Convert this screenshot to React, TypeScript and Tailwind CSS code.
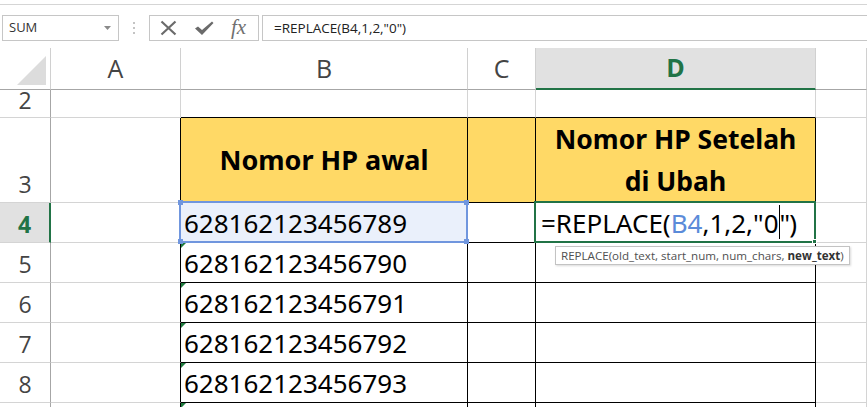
import React from 'react';

const UI_FONT = "font-['Open_Sans','Noto_Sans',sans-serif]";
const CELL_FONT = "font-['Noto_Sans','Open_Sans',sans-serif]";

const LIGHT = 'border-[#d4d4d4]';
const HEAD_SEP = 'border-r-[#d0d0d0]';

const phones = [
  '628162123456789',
  '628162123456790',
  '628162123456791',
  '628162123456792',
  '628162123456793',
];

// small green "number stored as text" flag in the top-left of a cell
function TextFlag() {
  return (
    <svg className="absolute left-0 top-0" width="5" height="5" viewBox="0 0 5 5">
      <polygon points="0,0 5,0 0,5" fill="#1e7a3e" />
    </svg>
  );
}

function FormulaBar() {
  return (
    <div className={`flex h-[26px] mt-[10px] ${UI_FONT}`}>
      <div className="ml-[2px] w-[117px] h-full border border-[#c6c6c6] flex items-center justify-between pl-[6px] pr-[7px]">
        <span className="text-[13px] text-[#333]">SUM</span>
        <svg width="7" height="4" viewBox="0 0 7 4">
          <polygon points="0,0 7,0 3.5,4" fill="#8a8a8a" />
        </svg>
      </div>
      <div className="w-[30px] flex flex-col items-center justify-center gap-[3px]">
        <span className="w-[2px] h-[2px] bg-[#c4c4c4]" />
        <span className="w-[2px] h-[2px] bg-[#c4c4c4]" />
        <span className="w-[2px] h-[2px] bg-[#c4c4c4]" />
      </div>
      <div className="w-[110px] h-full border border-[#c6c6c6] flex items-center pl-[10px] gap-[17px]">
        <svg width="17" height="16" viewBox="0 0 17 16">
          <path d="M1.5 1.5 L15.5 14.5 M15.5 1.5 L1.5 14.5" stroke="#6b6b6b" strokeWidth="2.2" fill="none" />
        </svg>
        <svg width="20" height="16" viewBox="0 0 20 16">
          <path d="M1 8.5 L4 6.5 L8 10 L18 1.5 L19.5 3 L8 15 Z" fill="#6b6b6b" />
        </svg>
        <span className="font-['Liberation_Serif',serif] italic text-[21px] leading-none text-[#707070] -mt-[2px]">
          fx
        </span>
      </div>
      <div className="flex-1 ml-[3px] -mr-[2px] h-full border border-[#c6c6c6] flex items-center pl-[11px]">
        <span className="text-[13.5px] text-[#222]">=REPLACE(B4,1,2,"0")</span>
      </div>
    </div>
  );
}

export default function App() {
  const colHeads = ['A', 'B', 'C', 'D', ''];

  return (
    <div className="w-[867px] h-[407px] overflow-hidden bg-white relative">
      <div className="h-[5px] border-b border-[#d5d5d5]" />
      <FormulaBar />

      <div className="mt-[7px] grid grid-cols-[51px_130px_287px_68px_280px_51px] grid-rows-[42px_28px_85px_40px_40px_40px_40px_40px_40px]">
        {/* column header row */}
        <div className="border-r border-b border-[#d0d0d0] border-b-[#a6a6a6] flex items-end justify-end pr-[4px] pb-[4px]">
          <svg width="29" height="29" viewBox="0 0 29 29">
            <polygon points="29,0 29,29 0,29" fill="#dcdcdc" />
          </svg>
        </div>
        {colHeads.map((c) =>
          c === 'D' ? (
            <div
              key={c}
              className={`border-r ${HEAD_SEP} border-b-2 border-b-[#217346] bg-[#e1e1e1] flex items-center justify-center text-[25px] font-bold text-[#217346] ${UI_FONT}`}
            >
              D
            </div>
          ) : (
            <div
              key={c || 'E'}
              className={`border-r ${HEAD_SEP} border-b border-b-[#a6a6a6] flex items-center justify-center text-[25px] text-[#444] ${UI_FONT}`}
            >
              {c}
            </div>
          )
        )}

        {/* row 2 */}
        <div className={`border-r border-r-[#a6a6a6] border-b ${LIGHT} flex items-end justify-center pb-[5px] text-[23px] leading-none text-[#444] ${UI_FONT}`}>
          2
        </div>
        <div className={`border-r border-r-[#d4d4d4] border-b ${LIGHT}`} />
        <div className="border-r border-r-[#d4d4d4] border-b border-b-black" />
        <div className="border-r border-r-[#d4d4d4] border-b border-b-black" />
        <div className="border-r border-r-[#d4d4d4] border-b border-b-black" />
        <div className={`border-r border-b ${LIGHT}`} />

        {/* row 3: table head */}
        <div className={`border-r border-r-[#a6a6a6] border-b ${LIGHT} flex items-end justify-center pb-[6px] text-[23px] leading-none text-[#444] ${UI_FONT}`}>
          3
        </div>
        <div className="border-r border-r-black border-b border-b-[#d4d4d4]" />
        <div className={`border-r border-b border-black bg-[#ffd966] flex items-center justify-center text-[27px] font-bold text-black ${CELL_FONT}`}>
          Nomor HP awal
        </div>
        <div className="border-r border-b border-black bg-[#ffd966]" />
        <div className={`border-r border-b border-black bg-[#ffd966] flex flex-col items-center justify-center text-[26.5px] leading-[42px] font-bold text-black ${CELL_FONT}`}>
          <span>Nomor HP Setelah</span>
          <span>di Ubah</span>
        </div>
        <div className={`border-r border-b ${LIGHT}`} />

        {/* data rows */}
        {phones.map((p, i) => {
          const n = i + 4;
          const active = n === 4;
          return (
            <React.Fragment key={p}>
              <div
                className={`border-b ${LIGHT} flex items-end justify-center pb-[6px] text-[23px] leading-none ${UI_FONT} ${
                  active
                    ? 'border-r-2 border-r-[#217346] bg-[#e1e1e1] font-bold text-[#217346]'
                    : 'border-r border-r-[#a6a6a6] text-[#444]'
                }`}
              >
                {n}
              </div>
              <div className="border-r border-r-black border-b border-b-[#d4d4d4]" />
              <div
                className={`relative border-r border-b border-black flex items-end pl-[3px] pb-[6px] text-[26px] leading-none text-black ${CELL_FONT} ${
                  active ? 'bg-[#eaf0fb]' : ''
                }`}
              >
                {!active && <TextFlag />}
                {p}
                {active && (
                  <div className="absolute -left-[2px] -top-[2px] -right-[1px] -bottom-[1px] border-2 border-[#7096de] z-10">
                    <span className="absolute -left-[3px] -top-[3px] w-[5px] h-[5px] bg-[#7096de]" />
                    <span className="absolute -right-[3px] -top-[3px] w-[5px] h-[5px] bg-[#7096de]" />
                    <span className="absolute -left-[3px] -bottom-[3px] w-[5px] h-[5px] bg-[#7096de]" />
                    <span className="absolute -right-[3px] -bottom-[3px] w-[5px] h-[5px] bg-[#7096de]" />
                  </div>
                )}
              </div>
              <div className="border-r border-b border-black" />
              <div
                className={`relative border-r border-b border-black flex items-end pl-[5px] pb-[6px] text-[26px] leading-none text-black ${CELL_FONT}`}
              >
                {active && (
                  <>
                    <span>
                      =REPLACE(<span className="text-[#5b8bd9]">B4</span>,1,2,"0
                    </span>
                    <span className="w-[1px] h-[34px] bg-black self-end -mb-[3px]" />
                    <span className="tracking-[-1px]">")</span>
                    <div className="absolute -left-[2px] -top-[2px] -right-[1px] -bottom-[1px] border-2 border-[#217346] z-10">
                      <span className="absolute -right-[3px] -bottom-[3px] w-[5px] h-[5px] bg-[#217346] border border-white" />
                    </div>
                    <div
                      className={`absolute left-[19px] top-[43px] z-20 h-[19px] px-[5px] flex items-center whitespace-nowrap bg-white border border-[#c3c3c3] shadow-[1px_1px_2px_rgba(0,0,0,0.15)] text-[11.6px] leading-none text-[#505050] ${UI_FONT}`}
                    >
                      REPLACE(old_text, start_num, num_chars,&nbsp;<b className="text-[#333]">new_text</b>)
                    </div>
                  </>
                )}
              </div>
              <div className={`border-r border-b ${LIGHT}`} />
            </React.Fragment>
          );
        })}

        {/* row 9, cut by the window edge */}
        <div className="border-r border-r-[#a6a6a6]" />
        <div className="border-r border-r-black" />
        <div className="relative border-r border-black">
          <TextFlag />
        </div>
        <div className="border-r border-black" />
        <div className="border-r border-black" />
        <div className={`border-r ${LIGHT}`} />
      </div>
    </div>
  );
}
